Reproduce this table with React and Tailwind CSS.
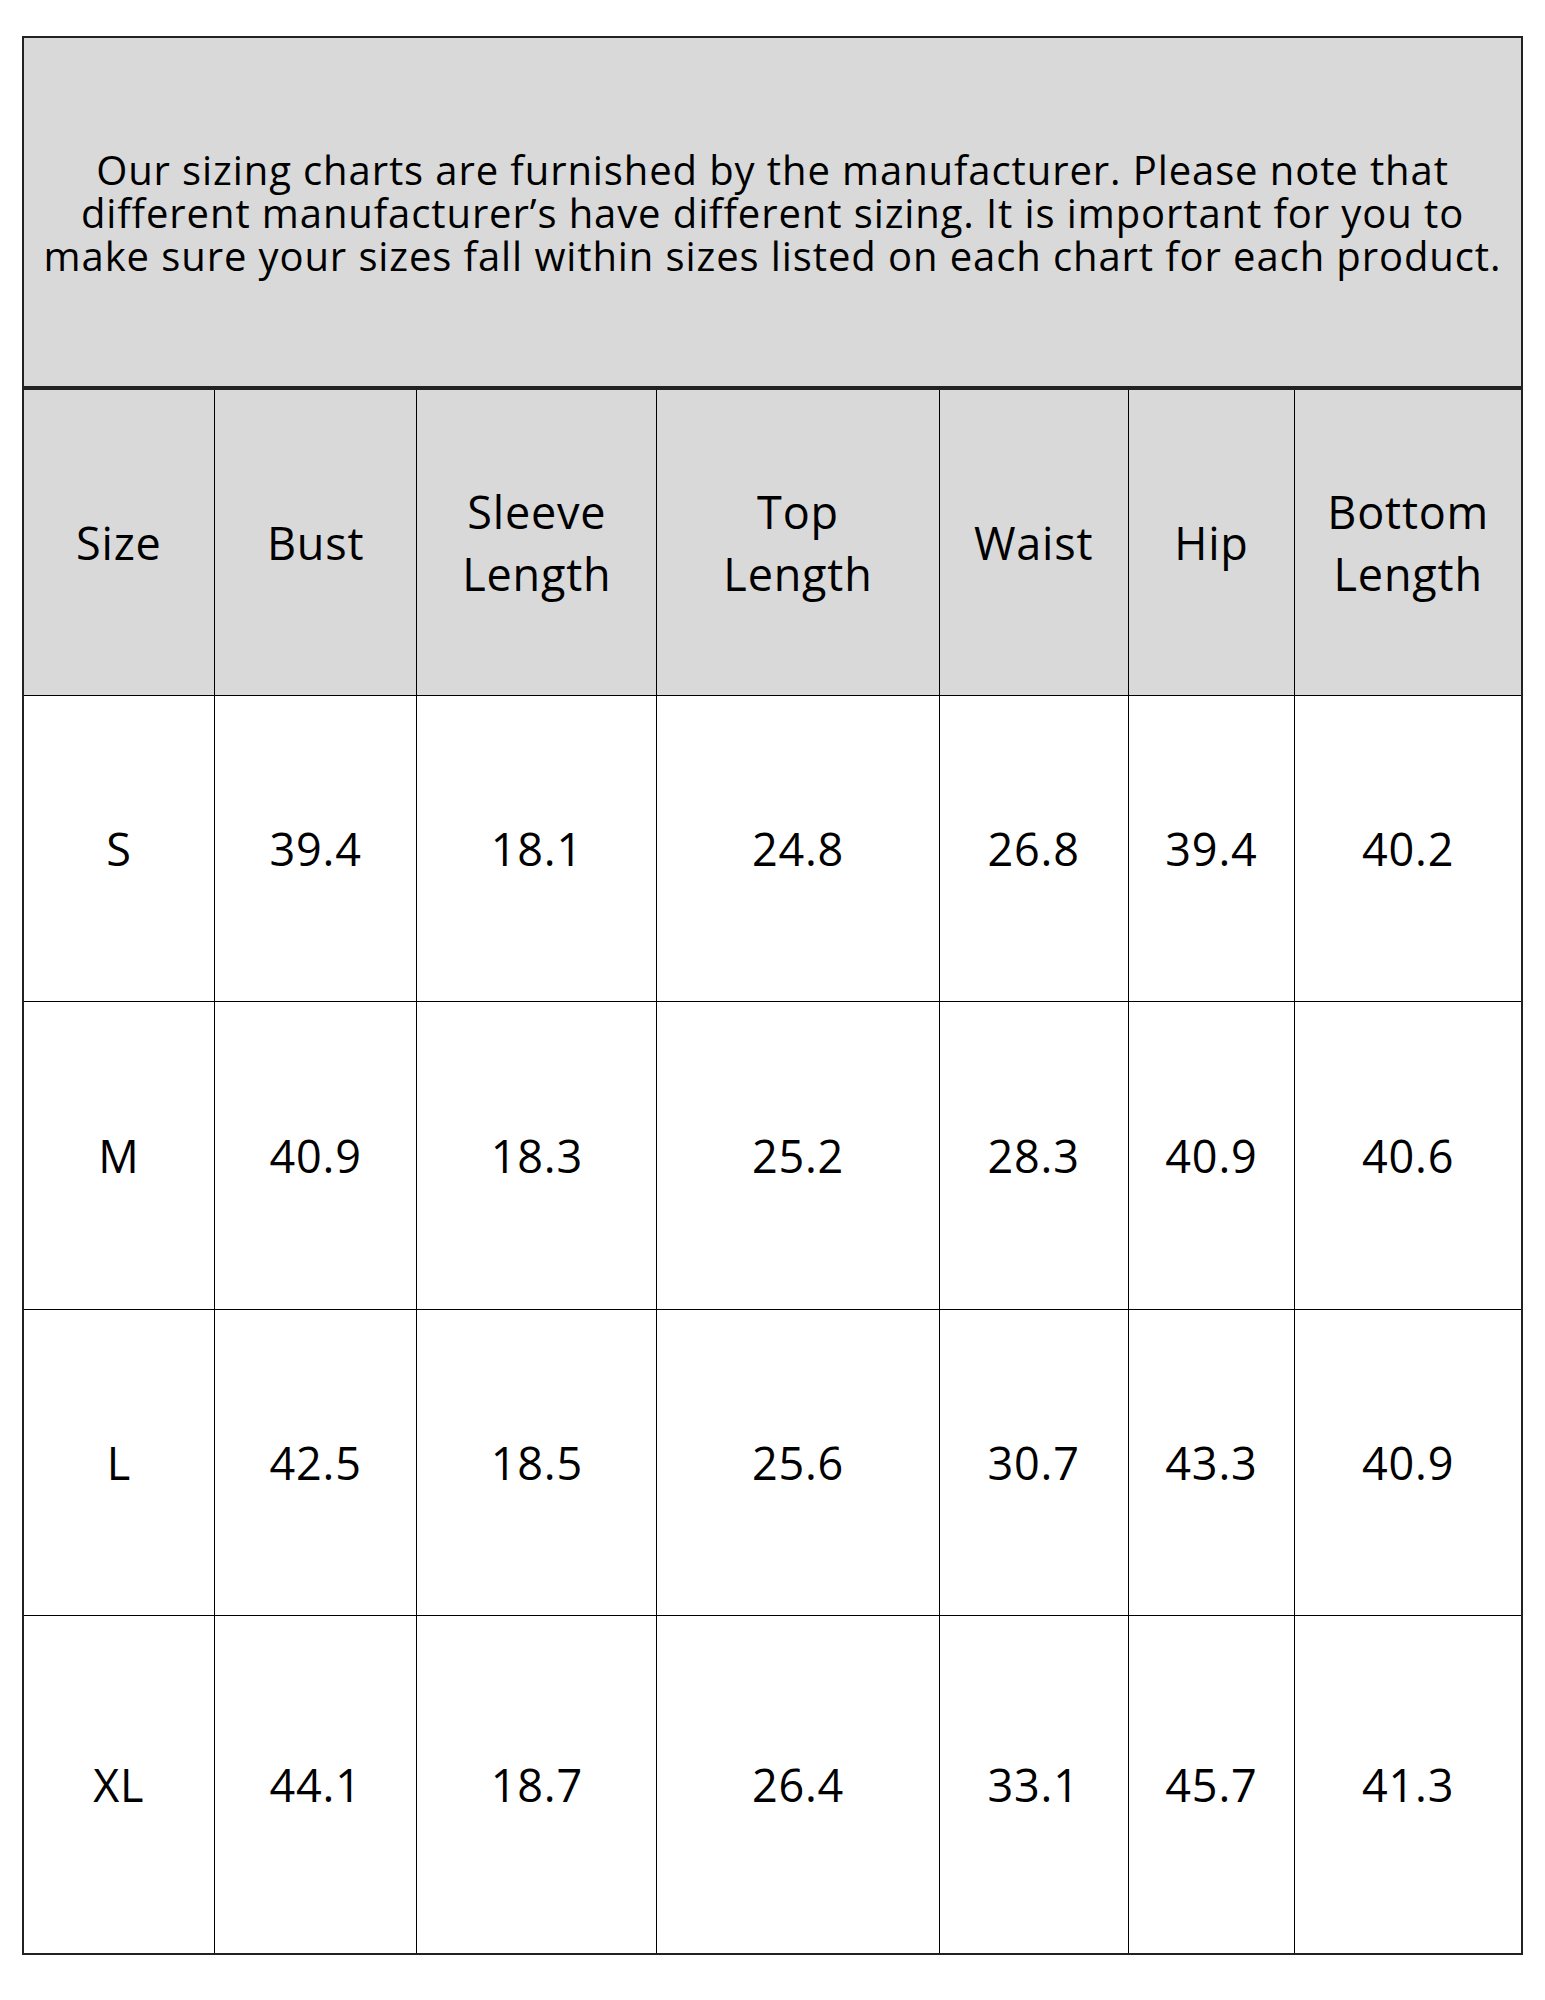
import React from "react";

const columns = [
	{ label: ["Size"], width: "w-[191px]" },
	{ label: ["Bust"], width: "w-[203px]" },
	{ label: ["Sleeve", "Length"], width: "w-[240px]" },
	{ label: ["Top", "Length"], width: "w-[283px]" },
	{ label: ["Waist"], width: "w-[189px]" },
	{ label: ["Hip"], width: "w-[167px]" },
	{ label: ["Bottom", "Length"], width: "w-[226px]" },
];

const rows = [
	{ height: "h-[306px]", values: ["S", "39.4", "18.1", "24.8", "26.8", "39.4", "40.2"] },
	{ height: "h-[308px]", values: ["M", "40.9", "18.3", "25.2", "28.3", "40.9", "40.6"] },
	{ height: "h-[306px]", values: ["L", "42.5", "18.5", "25.6", "30.7", "43.3", "40.9"] },
	{ height: "h-[337px]", values: ["XL", "44.1", "18.7", "26.4", "33.1", "45.7", "41.3"] },
];

function Cell({ width, last, children, className = "" }) {
	return (
		<div
			className={`${width} flex flex-col items-center justify-center text-center border-b border-black ${
				last ? "" : "border-r"
			} ${className}`}
		>
			{children}
		</div>
	);
}

export default function App() {
	return (
		<div
			className="bg-white w-[1545px] h-[2000px] pt-[36px] pl-[22px]"
			style={{ fontFamily: '"Open Sans", "Noto Sans", sans-serif' }}
		>
			<div className="w-[1501px] text-black">
				<div className="h-[352px] bg-[#d9d9d9] border-2 border-[#222] flex items-center justify-center">
					<p className="text-[40px] leading-[43px] text-center tracking-[0.9px]">
						Our sizing charts are furnished by the manufacturer. Please note that
						<br />
						different manufacturer’s have different sizing. It is important for you to
						<br />
						make sure your sizes fall within sizes listed on each chart for each product.
					</p>
				</div>
				<div className="border-2 border-t-[2px] border-[#222]">
					<div className="flex h-[306px] bg-[#d9d9d9]">
						{columns.map((col, i) => (
							<Cell key={i} width={col.width} last={i === columns.length - 1}>
								{col.label.map((line) => (
									<span key={line} className="text-[45px] leading-[62px] tracking-[0.8px]">
										{line}
									</span>
								))}
							</Cell>
						))}
					</div>
					{rows.map((row, r) => (
						<div key={r} className={`flex ${row.height}`}>
							{row.values.map((v, i) => (
								<Cell
									key={i}
									width={columns[i].width}
									last={i === columns.length - 1}
									className={r === rows.length - 1 ? "border-b-0" : ""}
								>
									<span className="text-[45px] leading-[62px] tracking-[0.8px]">{v}</span>
								</Cell>
							))}
						</div>
					))}
				</div>
			</div>
		</div>
	);
}
